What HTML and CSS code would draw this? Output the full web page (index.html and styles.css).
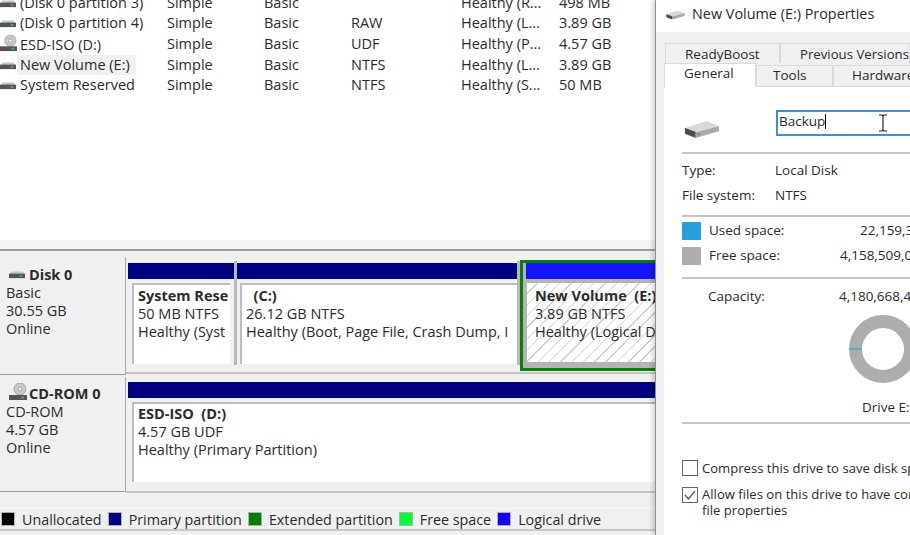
FILE: index.html
```html
<!DOCTYPE html>
<html lang="en">
<head>
  <meta charset="UTF-8">
  <meta name="viewport" content="width=device-width, initial-scale=1.0">
  <title>Disk Management</title>
  <link rel="stylesheet" href="styles.css">
</head>
<body>
<svg class="defs" width="0" height="0">
  <symbol id="hdd" viewBox="0 0 18 8">
    <path d="M1 2 3 0h12l2 2v1H1z" fill="#c4c4c4"/>
    <rect x="0" y="2.5" width="18" height="5" fill="#555"/>
    <rect x="12" y="4" width="3" height="2" fill="#3fb54a"/>
  </symbol>
  <symbol id="cd" viewBox="0 0 18 18">
    <circle cx="11" cy="6" r="6" fill="#c9c9c9" stroke="#999" stroke-width=".8"/>
    <circle cx="11" cy="6" r="1.8" fill="#f4f4f4" stroke="#888" stroke-width=".6"/>
    <rect x="0" y="12" width="18" height="5" fill="#555"/>
    <rect x="12" y="13.5" width="3" height="2" fill="#3fb54a"/>
  </symbol>
  <symbol id="drive-large" viewBox="0 0 38 19">
    <path d="M1 8 22 1c1-.3 2-.3 3 0l12 5v5L14 18c-1 .3-2 .3-3 0L1 14z" fill="#d8d8d8"/>
    <path d="M1 8 12 12c1 .3 2 .3 3 0L37 6v5L14 18c-1 .3-2 .3-3 0L1 14z" fill="#a9a9a9"/>
    <path d="M1 8 12 12v6L1 14z" fill="#4d4d4d"/>
    <rect x="14" y="13.5" width="3" height="2" fill="#3fb54a"/>
  </symbol>
</svg>

<div class="main">
  <div class="volumes">
    <table class="volume-table">
      <colgroup>
        <col class="c-name"><col class="c-layout"><col class="c-type"><col class="c-fs"><col class="c-status"><col>
      </colgroup>
      <tr>
        <td><svg class="row-icon"><use href="#hdd"/></svg><span class="name">(Disk 0 partition 3)</span></td>
        <td>Simple</td><td>Basic</td><td></td><td>Healthy (R...</td><td>498 MB</td>
      </tr>
      <tr>
        <td><svg class="row-icon"><use href="#hdd"/></svg><span class="name">(Disk 0 partition 4)</span></td>
        <td>Simple</td><td>Basic</td><td>RAW</td><td>Healthy (L...</td><td>3.89 GB</td>
      </tr>
      <tr>
        <td><svg class="row-icon-cd"><use href="#cd"/></svg><span class="name">ESD-ISO (D:)</span></td>
        <td>Simple</td><td>Basic</td><td>UDF</td><td>Healthy (P...</td><td>4.57 GB</td>
      </tr>
      <tr>
        <td><svg class="row-icon"><use href="#hdd"/></svg><span class="name selected">New Volume (E:)</span></td>
        <td>Simple</td><td>Basic</td><td>NTFS</td><td>Healthy (L...</td><td>3.89 GB</td>
      </tr>
      <tr>
        <td><svg class="row-icon"><use href="#hdd"/></svg><span class="name">System Reserved</span></td>
        <td>Simple</td><td>Basic</td><td>NTFS</td><td>Healthy (S...</td><td>50 MB</td>
      </tr>
    </table>
  </div>

  <div class="splitter"></div>

  <div class="disks">
    <div class="disk disk-first">
      <div class="disk-info">
        <div class="disk-title"><svg class="title-icon"><use href="#hdd"/></svg>Disk 0</div>
        <div>Basic</div>
        <div>30.55 GB</div>
        <div>Online</div>
      </div>
      <div class="disk-map">
        <div class="partition part-system">
          <div class="bar"></div>
          <div class="part-box">
            <div class="part-name">System Rese</div>
            <div>50 MB NTFS</div>
            <div>Healthy (Syst</div>
          </div>
        </div>
        <div class="partition part-c">
          <div class="bar"></div>
          <div class="part-box">
            <div class="part-name">&nbsp;&nbsp;(C:)</div>
            <div>26.12 GB NTFS</div>
            <div>Healthy (Boot, Page File, Crash Dump, I</div>
          </div>
        </div>
        <div class="partition-selected">
          <div class="bar bar-logical"></div>
          <div class="hatch-wrap">
            <div class="part-box hatch">
              <div class="part-name">New Volume&nbsp; (E:)</div>
              <div>3.89 GB NTFS</div>
              <div>Healthy (Logical Drive)</div>
            </div>
          </div>
        </div>
      </div>
    </div>

    <div class="disk disk-second">
      <div class="disk-info">
        <div class="disk-title"><svg class="title-icon-cd"><use href="#cd"/></svg>CD-ROM 0</div>
        <div>CD-ROM</div>
        <div>4.57 GB</div>
        <div>Online</div>
      </div>
      <div class="disk-map">
        <div class="partition part-wide">
          <div class="bar"></div>
          <div class="part-box">
            <div class="part-name">ESD-ISO&nbsp; (D:)</div>
            <div>4.57 GB UDF</div>
            <div>Healthy (Primary Partition)</div>
          </div>
        </div>
      </div>
    </div>
  </div>

  <div class="legend">
    <span class="swatch sw-black"></span><span class="legend-label">Unallocated</span>
    <span class="swatch sw-navy"></span><span class="legend-label">Primary partition</span>
    <span class="swatch sw-green"></span><span class="legend-label">Extended partition</span>
    <span class="swatch sw-lime"></span><span class="legend-label">Free space</span>
    <span class="swatch sw-blue"></span><span class="legend-label">Logical drive</span>
  </div>
</div>

<div class="dialog">
  <div class="titlebar">
    <svg class="titlebar-icon"><use href="#drive-large"/></svg>
    New Volume (E:) Properties
  </div>
  <div class="tabs-back">
    <div class="tab tab-ready">ReadyBoost</div>
    <div class="tab tab-prev">Previous Versions</div>
  </div>
  <div class="tabs-front">
    <div class="tab tab-general">General</div>
    <div class="tab tab-tools">Tools</div>
    <div class="tab tab-hardware">Hardware</div>
  </div>
  <div class="panel">
    <div class="name-row">
      <svg class="drive-icon"><use href="#drive-large"/></svg>
      <div class="name-input">Backup<span class="caret"></span></div>
    </div>
    <div class="sep sep-name"></div>
    <div class="info-row row-type"><span class="info-label">Type:</span>Local Disk</div>
    <div class="info-row row-fs"><span class="info-label">File system:</span>NTFS</div>
    <div class="sep sep-fs"></div>
    <div class="space-row row-used">
      <span class="space-swatch used"></span><span class="space-label">Used space:</span><span class="val-used">22,159,360 bytes</span>
    </div>
    <div class="space-row row-free">
      <span class="space-swatch free"></span><span class="space-label">Free space:</span><span class="val-big">4,158,509,056 bytes</span>
    </div>
    <div class="sep sep-space"></div>
    <div class="space-row row-cap">
      <span class="space-gap"></span><span class="space-label">Capacity:</span><span class="val-big">4,180,668,416 bytes</span>
    </div>
    <svg class="donut" width="68" height="68" viewBox="0 0 68 68">
      <circle cx="34" cy="34" r="27.5" fill="none" stroke="#adadad" stroke-width="13"/>
      <rect x="0" y="33.5" width="13" height="1" fill="#26a0da"/>
    </svg>
    <div class="drive-label">Drive E:</div>
    <div class="sep sep-drive"></div>
    <label class="check-row check-first"><span class="check"></span>Compress this drive to save disk space</label>
    <label class="check-row check-second">
      <span class="check"><svg width="14" height="14" viewBox="0 0 14 14"><path d="M2 7l3.5 4L12 3" fill="none" stroke="#555" stroke-width="1.3"/></svg></span>
      <span>Allow files on this drive to have contents indexed in addition to<br>file properties</span>
    </label>
  </div>
  <svg class="ibeam" width="10" height="18" viewBox="0 0 10 18">
    <path d="M1 1h3l1 1 1-1h3M5 2v14M1 17h3l1-1 1 1h3" fill="none" stroke="#222" stroke-width="1.2"/>
  </svg>
</div>
</body>
</html>
```

FILE: styles.css
```css
html, body {
  height: 100%;
}
body {
  margin: 0;
  display: flex;
  overflow: hidden;
  font-family: "Open Sans", sans-serif;
  font-size: 13.5px;
  color: #2b2b2b;
  background: #f0f0f0;
}
.defs {
  position: absolute;
}

/* left side */
.main {
  width: 655px;
  flex: none;
  height: 535px;
  display: flex;
  flex-direction: column;
  overflow: hidden;
  font-size: 14.5px;
}
.volumes {
  height: 240px;
  flex: none;
  background: white;
  overflow: hidden;
}
.volume-table {
  border-collapse: collapse;
  table-layout: fixed;
  width: 655px;
  margin-top: -6px;
}
.c-name { width: 167px; }
.c-layout { width: 97px; }
.c-type { width: 87px; }
.c-fs { width: 110px; }
.c-status { width: 98px; }
.volume-table td {
  box-sizing: border-box;
  padding: 0 0 2px;
  height: 20.3px;
  line-height: 18px;
  white-space: nowrap;
}
.row-icon {
  width: 16px;
  height: 8px;
  margin-right: 4px;
}
.row-icon-cd {
  width: 17px;
  height: 17px;
  margin-right: 3px;
  vertical-align: -2px;
}
.name {
  display: inline-block;
}
.selected {
  background: #f0f0f0;
  padding: 1px 6px 1px 3px;
  margin: -1px 0 -1px -3px;
}
.splitter {
  height: 11px;
  flex: none;
  background: #f5f5f5;
  border-bottom: 2px solid #9d9d9d;
  box-sizing: border-box;
}
.disks {
  flex: none;
  padding-top: 6px;
}
.disk {
  display: flex;
}
.disk-first {
  height: 118px;
}
.disk-second {
  height: 115px;
  margin-top: 2px;
}
.disk-info {
  width: 126px;
  flex: none;
  box-sizing: border-box;
  padding: 8px 0 0 6px;
  line-height: 18px;
  background: #f0f0f0;
  border-bottom: 1px solid #9d9d9d;
  border-right: 1px solid #aaa;
}
.disk-first .disk-info {
  padding-top: 9px;
}
.disk-title {
  font-weight: bold;
  display: flex;
  align-items: center;
  height: 18px;
}
.title-icon {
  width: 16px;
  height: 8px;
  margin: 0 4px 0 3px;
}
.title-icon-cd {
  width: 18px;
  height: 18px;
  margin: -4px 2px 0 3px;
}
.disk-map {
  flex: 1;
  display: flex;
  min-width: 0;
  padding: 4px 0 0 2px;
  overflow: hidden;
  border-bottom: 2px solid #c4c4c4;
  height: 111px;
}
.disk-second .disk-map {
  padding-top: 3px;
}
.partition {
  flex: none;
  padding-top: 2px;
  border-right: 3px solid #b9b9b9;
  height: 104px;
  box-sizing: border-box;
  background: #f0f0f0;
}
.part-system { width: 109px; }
.part-c { width: 283px; }
.part-wide {
  width: 527px;
  border-right: 0;
}
.bar {
  height: 16px;
  background: navy;
  margin-bottom: 4px;
}
.part-box {
  background: white;
  margin-left: 4px;
  height: 81px;
  box-sizing: border-box;
  border-left: 2px solid #bdbdbd;
  border-top: 2px solid #bdbdbd;
  padding: 2px 0 0 4px;
  line-height: 18px;
  white-space: nowrap;
  overflow: hidden;
}
.part-system .part-box { margin-right: 4px; }
.part-c .part-box { margin-left: 3px; }
.part-name {
  font-weight: bold;
}
.partition-selected {
  flex: none;
  width: 136px;
  margin-top: -1px;
  height: 111px;
  box-sizing: border-box;
  border: 3px solid #0a7d0a;
  border-right: 0;
  background: #b4b4b4;
  overflow: hidden;
}
.bar-logical {
  background: #1414ff;
  margin: 0 0 1px 3px;
}
.hatch-wrap {
  padding: 3px 0 0 4px;
}
.hatch {
  margin-left: 0;
  border: 0;
  height: 79px;
  padding: 4px 0 0 8px;
  background: repeating-linear-gradient(135deg, #fff 0, #fff 7px, #cfcfcf 7px, #cfcfcf 8px);
}
.disk-second .part-box {
  margin-left: 4px;
  height: 80px;
  padding-top: 1px;
}
.legend {
  margin-top: 16px;
  height: 23px;
  flex: none;
  box-sizing: border-box;
  display: flex;
  align-items: center;
  border-top: 1px solid #f8f8f8;
  border-bottom: 2px solid #c8c8c8;
  padding-left: 1px;
  font-size: 14.3px;
}
.swatch {
  width: 12px;
  height: 12px;
  border: 1px solid #b0b0b0;
  flex: none;
}
.legend-label {
  margin: 0 6px 0 7px;
}
.sw-black { background: black; }
.sw-navy { background: navy; }
.sw-green { background: #008000; }
.sw-lime { background: #00ff33; }
.sw-blue { background: #1400ff; }

/* properties dialog */
.dialog {
  position: relative;
  flex: 1;
  min-width: 0;
  height: 535px;
  background: #f0f0f0;
  border-left: 1px solid #8f8f8f;
  box-shadow: -3px 0 4px rgba(0, 0, 0, 0.15);
  overflow: hidden;
}
.titlebar {
  height: 32px;
  box-sizing: border-box;
  background: white;
  display: flex;
  align-items: center;
  white-space: nowrap;
  padding: 0 0 6px 10px;
  font-size: 14.4px;
}
.titlebar-icon {
  width: 19px;
  height: 10px;
  margin: 3px 7px 0 0;
}
.tabs-back, .tabs-front {
  display: flex;
  white-space: nowrap;
}
.tabs-back {
  padding: 11px 0 0 9px;
}
.tab {
  flex: none;
  box-sizing: border-box;
  border: 1px solid #dadada;
  border-bottom: 0;
  line-height: 18px;
}
.tab-ready {
  width: 115px;
  height: 20px;
  padding-left: 19px;
  line-height: 20px;
}
.tab-prev {
  width: 130px;
  height: 20px;
  padding-left: 19px;
  line-height: 20px;
  font-size: 13.2px;
}
.tabs-front {
  padding-left: 8px;
  position: relative;
}
.tab-general {
  width: 92px;
  height: 24px;
  background: white;
  padding-left: 19px;
}
.tab-tools {
  width: 77px;
  height: 22px;
  margin-top: 2px;
  padding-left: 16px;
}
.tab-hardware {
  width: 90px;
  height: 22px;
  margin-top: 2px;
  padding-left: 18px;
}
.panel {
  margin-left: 8px;
  background: white;
  height: 460px;
  padding-left: 18px;
  white-space: nowrap;
  border-top: 1px solid #dadada;
  margin-top: -1px;
}
.name-row {
  display: flex;
  padding-top: 23px;
}
.drive-icon {
  width: 38px;
  height: 19px;
  margin: 10px 56px 0 2px;
}
.name-input {
  width: 134px;
  height: 26px;
  box-sizing: border-box;
  border: 2px solid #3d8fd6;
  border-right: 0;
  padding-left: 1px;
  line-height: 18px;
  flex: none;
}
.caret {
  display: inline-block;
  width: 1px;
  height: 15px;
  background: #111;
  vertical-align: -3px;
}
.sep {
  height: 2px;
  background: #c6c6c6;
}
.sep-name { margin-top: 13px; }
.info-row {
  line-height: 20px;
}
.info-label {
  display: inline-block;
  width: 93px;
}
.row-type { margin-top: 6px; }
.row-fs { margin-top: 5px; }
.sep-fs { margin-top: 10px; }
.space-row {
  display: flex;
  align-items: center;
  height: 20px;
}
.row-used { margin-top: 4px; }
.row-free { margin-top: 5px; }
.row-cap { margin-top: 8px; }
.space-swatch {
  width: 19px;
  height: 18px;
  flex: none;
  margin-right: 8px;
}
.space-gap {
  width: 26px;
  flex: none;
}
.used { background: #26a0da; }
.free { background: #adadad; }
.space-label {
  width: 131px;
  flex: none;
  margin-bottom: 2px;
}
.val-used {
  margin: 0 0 2px 20px;
}
.val-big {
  margin-bottom: 2px;
}
.sep-space { margin-top: 11px; }
.donut {
  display: block;
  margin: 8px 0 0 167px;
}
.drive-label {
  margin: 14px 0 0 180px;
  line-height: 20px;
}
.sep-drive { margin-top: 5px; }
.check-row {
  display: flex;
  align-items: flex-start;
  line-height: 16px;
  font-size: 13.1px;
}
.check-first { margin-top: 36px; }
.check-second { margin-top: 10px; }
.check-second .check { margin-top: 1px; }
.check {
  width: 14px;
  height: 14px;
  flex: none;
  border: 1px solid #666;
  margin-right: 4px;
}
.check svg {
  display: block;
}
.ibeam {
  position: absolute;
  left: 222px;
  top: 114px;
}
```
